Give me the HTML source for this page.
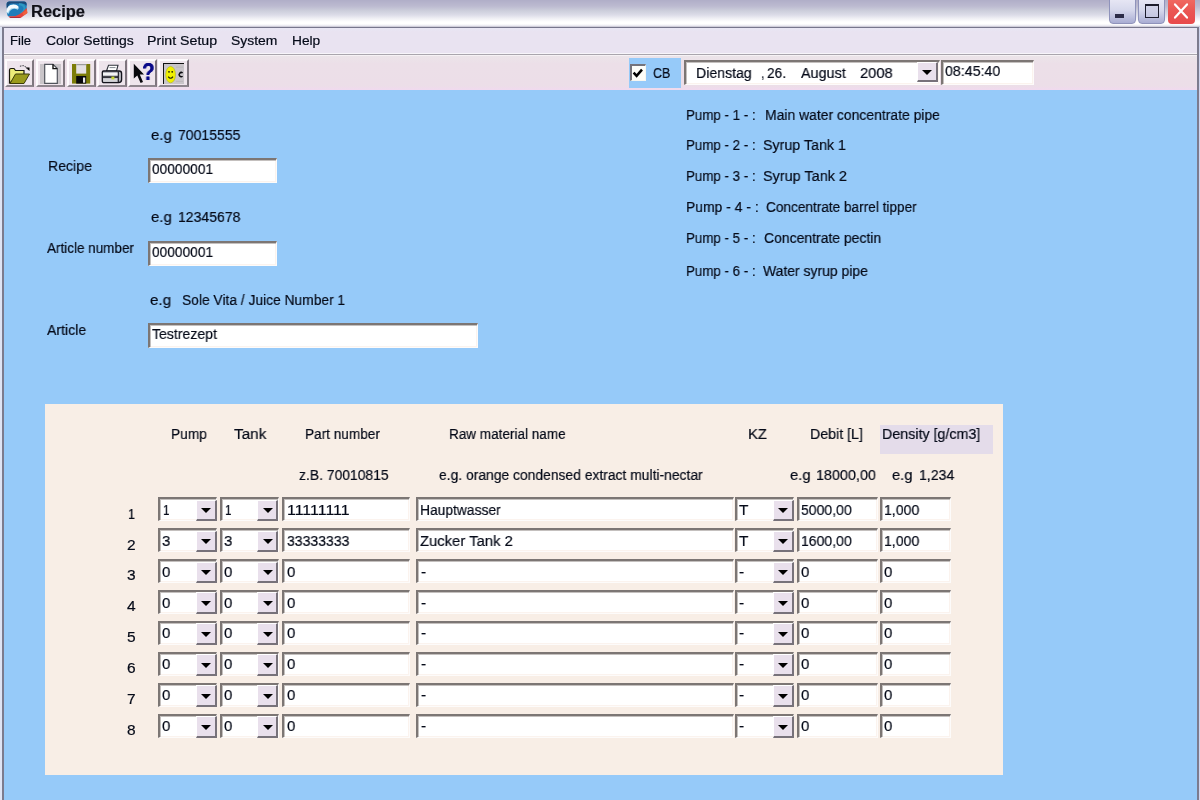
<!DOCTYPE html>
<html>
<head>
<meta charset="utf-8">
<title>Recipe</title>
<style>
html,body{margin:0;padding:0;}
body{width:1200px;height:800px;overflow:hidden;position:relative;background:#96caf9;font-family:"Liberation Sans",sans-serif;}
.b{position:absolute;box-sizing:border-box;}
.t{will-change:transform;transform-origin:0 0;position:absolute;white-space:pre;font-family:"Liberation Sans",sans-serif;-webkit-text-stroke:.2px currentColor;}
/* sunken edit field */
.inp{background:#fff;border-top:2px solid #7c7674;border-left:2px solid #7c7674;border-right:1px solid #fdfbfa;border-bottom:1px solid #fdfbfa;box-shadow:inset 1px 1px 0 #c4c0be, inset -1px -1px 0 #fbf3ee;}
/* combo arrow button */
.cbtn{background:#e9e0ec;border-top:1px solid #fff;border-left:1px solid #fff;border-right:2px solid #77727a;border-bottom:2px solid #77727a;}
.cbtn i{position:absolute;left:50%;top:50%;margin-left:-4.7px;margin-top:-1.6px;width:0;height:0;border-left:5.2px solid transparent;border-right:5.2px solid transparent;border-top:5.2px solid #000;}
/* toolbar button */
.tb{background:#eee5ec;border-top:2px solid #fdfbfd;border-left:2px solid #fdfbfd;border-right:2px solid #7e767e;border-bottom:2px solid #8e868e;}
</style>
</head>
<body>

<!-- title bar -->
<div class="b" style="left:0;top:0;width:1200px;height:27px;background:linear-gradient(to bottom,#b0aec8 0px,#bcbad0 6px,#cdcfdc 11px,#dcdce8 15px,#f2f2f6 19px,#ffffff 22px,#ffffff 24px,#e6e4ee 26px,#b8b6c4 27px);"></div>
<div class="b" style="left:2px;top:26.5px;width:1197px;height:1.6px;background:#77768c;"></div>
<!-- menu bar -->
<div class="b" style="left:4px;top:28px;width:1193px;height:26px;background:linear-gradient(to bottom,#e8e6f4 0px,#e9e3f1 4px,#e9e3f1 26px);"></div>
<div class="b" style="left:4px;top:53px;width:1193px;height:1px;background:#f7f5fa;"></div>
<div class="b" style="left:4px;top:54px;width:1193px;height:1px;background:#a9a5ad;"></div>
<div class="b" style="left:4px;top:55px;width:1193px;height:1px;background:#f6f2f5;"></div>
<!-- toolbar -->
<div class="b" style="left:4px;top:56px;width:1193px;height:33.5px;background:linear-gradient(to bottom,#ebe4e9 0,#ecdfe8 8px,#ecdee8 30px,#f0daee 33.5px);"></div>
<!-- window side borders -->
<div class="b" style="left:0;top:27px;width:2.5px;height:773px;background:#dfe4f4;"></div>
<div class="b" style="left:2.3px;top:27px;width:1.8px;height:773px;background:#7c7b8e;"></div>
<div class="b" style="left:1197px;top:27px;width:1.6px;height:773px;background:#7c7b8e;"></div>
<div class="b" style="left:1198.6px;top:27px;width:1.4px;height:773px;background:#cfd4ee;"></div>

<!-- app icon -->
<svg class="b" style="left:5px;top:0px" width="24" height="20" viewBox="0 0 24 20">
  <path d="M1.6 4 Q1.6 1.4 4.5 1.4 L19 1.4 Q21.6 1.4 21.6 4 L21.8 10.5 L16 16.6 L5 16.8 Q2.4 16.8 2.2 14 Z" fill="#1f7cba"/>
  <path d="M1.6 4.4 Q1.6 1.4 4.5 1.4 L19 1.4 Q21.6 1.4 21.6 4.4 L21.6 5.8 Q20 3.4 17 3.4 L6 3.4 Q3.4 3.8 3 7.5 L1.7 8 Z" fill="#1b4a7a"/>
  <path d="M14 4.2 Q19.4 4.6 19.6 8.6 Q19.4 12 15.6 14" stroke="#34a4c4" stroke-width="2.2" fill="none" opacity=".7"/>
  <path d="M21.6 8 L22.4 13 L15.6 17.9 L5.5 17.9 L3.4 16.2 Q10 16.9 14 14.5 Q18.2 12 21.6 8 Z" fill="#e3453f"/>
  <path d="M17.5 13 L22 9.6 L22.3 13 L18.6 15.6 Z" fill="#f0603c"/>
  <path d="M4 17 L15.4 17.1 L14.6 18.1 L5.5 18.1 Z" fill="#a82c3c"/>
  <path d="M1.5 12.8 Q1.6 7 5.6 5.2 Q10 3.8 13.6 6.4 Q14.4 8.2 12.8 9.8 Q9.4 8 6.6 9.4 Q4.2 10.8 3.8 13.8 Z" fill="#a6d6ec"/>
  <path d="M1.5 11.8 Q1.6 6.8 5.6 5 Q9.6 3.8 13 6 Q13.6 7.4 12.4 8.6 Q9.2 7.2 6 8.6 Q3.6 10 3.1 12.4 Z" fill="#f4fafd"/>
</svg>

<!-- caption buttons -->
<div class="b" style="left:1109px;top:-1px;width:26.5px;height:24.5px;border-radius:0 0 4px 4px;border:1px solid #8f93bb;background:linear-gradient(to bottom,#e6e6f4 0,#d6d8ec 45%,#a9add3 100%);"></div>
<div class="b" style="left:1115px;top:14px;width:9.3px;height:3.6px;background:#2c2c48;"></div>
<div class="b" style="left:1138.4px;top:-1px;width:26.5px;height:24.5px;border-radius:0 0 4px 4px;border:1px solid #8f93bb;background:linear-gradient(to bottom,#e6e6f4 0,#d6d8ec 45%,#a9add3 100%);"></div>
<div class="b" style="left:1145px;top:4px;width:13.8px;height:13.6px;border:1.3px solid #1c1c2c;border-top-width:2.6px;background:rgba(200,202,226,.6);"></div>
<div class="b" style="left:1168px;top:-1px;width:26.8px;height:25px;border-radius:0 0 4px 4px;background:linear-gradient(to bottom,#f06a62 0,#ea5552 50%,#e84a4c 100%);"></div>
<svg class="b" style="left:1172px;top:2px" width="18" height="18" viewBox="0 0 18 18"><path d="M3 2.4 L15 15.6 M15 2.4 L3 15.6" stroke="#fff" stroke-width="2.2" stroke-linecap="round"/></svg>

<!-- toolbar buttons -->
<div class="b tb" style="left:4.5px;top:58.5px;width:29.8px;height:28px;"></div>
<div class="b tb" style="left:35.6px;top:58.5px;width:29.8px;height:28px;"></div>
<div class="b tb" style="left:66.6px;top:58.5px;width:29.8px;height:28px;"></div>
<div class="b tb" style="left:97.2px;top:58.5px;width:29.4px;height:28px;"></div>
<div class="b tb" style="left:127.6px;top:58.5px;width:29.8px;height:28px;"></div>
<div class="b tb" style="left:158.4px;top:58.5px;width:30.4px;height:28px;"></div>

<!-- icon 1: open folder -->
<svg class="b" style="left:8px;top:62px" width="24" height="24" viewBox="0 0 24 24">
  <path d="M1.5 21 L1.5 8 Q1.5 6.5 3 6.5 L6 6.5 L7.5 8.5 L16 8.5 L16 12 L1.5 21 Z" fill="#ecec78" stroke="#18180c" stroke-width="1.2"/>
  <path d="M2 21.5 L7.5 12 L21.5 12 L16 21.5 Z" fill="#9a9a1c" stroke="#3c3c08" stroke-width="1"/>
  <path d="M17.5 5.5 L21.5 5.5 L21.5 9 Z" fill="#000"/>
  <path d="M12 4.5 Q15.5 2 19.5 6.5" stroke="#55555c" stroke-width="1.1" fill="none" stroke-dasharray="1.5 1"/>
</svg>
<!-- icon 2: new document -->
<div class="b" style="left:40px;top:64px;width:20.5px;height:19.5px;background:#c9c5c9;"></div>
<svg class="b" style="left:42px;top:62px" width="20" height="24" viewBox="0 0 20 24">
  <path d="M2.7 2.3 L11 2.3 L15.3 6.6 L15.3 21.3 L2.7 21.3 Z" fill="#fff" stroke="#50545c" stroke-width="1.2"/>
  <path d="M11 2.3 L11 6.6 L15.3 6.6" fill="none" stroke="#101010" stroke-width="1.4"/>
</svg>
<!-- icon 3: floppy -->
<svg class="b" style="left:70px;top:62px" width="24" height="24" viewBox="0 0 24 24">
  <rect x="2" y="2" width="18.2" height="19.6" fill="#7c7c08"/>
  <rect x="6.2" y="2" width="10" height="9.6" fill="#e4e0e4"/>
  <rect x="6.2" y="2" width="10" height="1.2" fill="#9c9c9c"/>
  <rect x="6.2" y="14" width="10" height="7.6" fill="#08080c"/>
  <rect x="13" y="15.5" width="2.2" height="5.2" fill="#e8e8e8"/>
</svg>
<!-- icon 4: printer -->
<svg class="b" style="left:100px;top:62px" width="24" height="24" viewBox="0 0 24 24">
  <path d="M6.5 9 L8.5 3.2 L18 3.2 L16.5 9 Z" fill="#fff" stroke="#30343c" stroke-width="1.1"/>
  <path d="M9.5 5.6 L15.5 5.6" stroke="#808890" stroke-width="1"/>
  <path d="M2.3 10.2 Q2.3 9 3.6 9 L19.2 9 Q21.6 9 21.6 11.5 L21.6 17.5 Q21.6 20.6 18.5 20.6 L4 20.6 Q2.3 20.6 2.3 19 Z" fill="#b9b9c1" stroke="#14141c" stroke-width="1.3"/>
  <rect x="3" y="11" width="15" height="2.2" fill="#f4f4f4"/>
  <rect x="3" y="14.3" width="15" height="1.5" fill="#14141c"/>
  <rect x="3.2" y="16.6" width="14" height="3" fill="#d4d4d8"/>
  <rect x="11.4" y="14.6" width="3" height="2.8" fill="#c8d830"/>
  <path d="M18.3 9.5 L18.3 20" stroke="#14141c" stroke-width="1.1"/>
</svg>
<!-- icon 5: help arrow + ? -->
<svg class="b" style="left:131px;top:62px" width="24" height="24" viewBox="0 0 24 24">
  <path d="M2.8 1.8 L2.8 16.6 L6.3 13.4 L9.6 21 L12 20 L8.8 12.6 L13 12.6 Z" fill="#08080c"/>
</svg>
<div class="t" style="left:141.8px;top:59.8px;font-size:23px;line-height:24px;font-weight:bold;color:#0a0a88;transform:scaleX(.9);text-shadow:0 0 .6px #0a0a88;transform-origin:left top;">?</div>
<!-- icon 6: smiley -->
<div class="b" style="left:163.2px;top:63px;width:20.8px;height:20.5px;background:#c9c5c9;border-top:1.6px solid #111;border-left:1.6px solid #111;"></div>
<svg class="b" style="left:162px;top:62px" width="24" height="24" viewBox="0 0 24 24">
  <ellipse cx="8.6" cy="12.6" rx="4.9" ry="8.2" fill="#f0f000"/>
  <ellipse cx="8.6" cy="12.6" rx="4.9" ry="8.2" fill="none" stroke="#b0b020" stroke-width=".6"/>
  <circle cx="7" cy="9.8" r=".9" fill="#202008"/>
  <circle cx="10.2" cy="9.8" r=".9" fill="#202008"/>
  <path d="M6.2 14.6 Q8.6 18 11 14.6" stroke="#202008" stroke-width="1.1" fill="none"/>
  <path d="M20.6 11 A2.1 2.1 0 1 0 20.6 14.2" stroke="#08080c" stroke-width="1.5" fill="none"/>
  <path d="M14.5 5.2 L21 5.2 M14.5 19.4 L21 19.4" stroke="#a8a4a8" stroke-width=".8" stroke-dasharray="1 1"/>
</svg>

<!-- CB checkbox area -->
<div class="b" style="left:629.4px;top:58px;width:52px;height:30px;background:#96caf9;"></div>
<div class="b" style="left:630.4px;top:64.4px;width:15.8px;height:16.2px;background:#fdfdf8;border-top:2px solid #74747c;border-left:2px solid #74747c;border-right:1px solid #f6f6f0;border-bottom:1px solid #f6f6f0;"></div>
<svg class="b" style="left:630px;top:64px" width="18" height="18" viewBox="0 0 18 18"><path d="M3.6 8.6 L6.6 11.8 L12 5.6" stroke="#000" stroke-width="2.5" fill="none"/></svg>
<!-- date picker -->
<div class="b inp" style="left:684.4px;top:59.6px;width:255.6px;height:25.4px;"></div>
<div class="b cbtn" style="left:917.4px;top:62.4px;width:20.4px;height:19.2px;"><i></i></div>
<!-- time -->
<div class="b inp" style="left:941.2px;top:59.6px;width:93.2px;height:25.4px;"></div>

<!-- table panel -->
<div class="b" style="left:45.2px;top:404.4px;width:957.6px;height:370.6px;background:#f8eee6;"></div>
<div class="b" style="left:880px;top:424.8px;width:112.6px;height:29.4px;background:#e4dcea;"></div>

<!-- caret -->
<div class="b" style="left:210.6px;top:162.4px;width:1.2px;height:13.8px;background:#000;"></div>

<div class="b inp" style="left:148.30px;top:157.50px;width:128.70px;height:25.00px;"></div>
<div class="b inp" style="left:148.30px;top:240.80px;width:128.70px;height:25.00px;"></div>
<div class="b inp" style="left:148.00px;top:322.50px;width:330.00px;height:25.00px;"></div>
<div class="b inp" style="left:158.20px;top:497.10px;width:59.00px;height:24.40px;"></div>
<div class="b cbtn" style="left:195.70px;top:499.60px;width:21.00px;height:21.80px"><i></i></div>
<div class="b inp" style="left:220.30px;top:497.10px;width:58.50px;height:24.40px;"></div>
<div class="b cbtn" style="left:257.30px;top:499.60px;width:21.00px;height:21.80px"><i></i></div>
<div class="b inp" style="left:282.40px;top:497.10px;width:127.80px;height:24.40px;"></div>
<div class="b inp" style="left:416.00px;top:497.10px;width:318.20px;height:24.40px;"></div>
<div class="b inp" style="left:735.40px;top:497.10px;width:59.00px;height:24.40px;"></div>
<div class="b cbtn" style="left:772.90px;top:499.60px;width:21.00px;height:21.80px"><i></i></div>
<div class="b inp" style="left:797.30px;top:497.10px;width:81.10px;height:24.40px;"></div>
<div class="b inp" style="left:879.60px;top:497.10px;width:71.40px;height:24.40px;"></div>
<div class="b inp" style="left:158.20px;top:528.05px;width:59.00px;height:24.40px;"></div>
<div class="b cbtn" style="left:195.70px;top:530.55px;width:21.00px;height:21.80px"><i></i></div>
<div class="b inp" style="left:220.30px;top:528.05px;width:58.50px;height:24.40px;"></div>
<div class="b cbtn" style="left:257.30px;top:530.55px;width:21.00px;height:21.80px"><i></i></div>
<div class="b inp" style="left:282.40px;top:528.05px;width:127.80px;height:24.40px;"></div>
<div class="b inp" style="left:416.00px;top:528.05px;width:318.20px;height:24.40px;"></div>
<div class="b inp" style="left:735.40px;top:528.05px;width:59.00px;height:24.40px;"></div>
<div class="b cbtn" style="left:772.90px;top:530.55px;width:21.00px;height:21.80px"><i></i></div>
<div class="b inp" style="left:797.30px;top:528.05px;width:81.10px;height:24.40px;"></div>
<div class="b inp" style="left:879.60px;top:528.05px;width:71.40px;height:24.40px;"></div>
<div class="b inp" style="left:158.20px;top:559.00px;width:59.00px;height:24.40px;"></div>
<div class="b cbtn" style="left:195.70px;top:561.50px;width:21.00px;height:21.80px"><i></i></div>
<div class="b inp" style="left:220.30px;top:559.00px;width:58.50px;height:24.40px;"></div>
<div class="b cbtn" style="left:257.30px;top:561.50px;width:21.00px;height:21.80px"><i></i></div>
<div class="b inp" style="left:282.40px;top:559.00px;width:127.80px;height:24.40px;"></div>
<div class="b inp" style="left:416.00px;top:559.00px;width:318.20px;height:24.40px;"></div>
<div class="b inp" style="left:735.40px;top:559.00px;width:59.00px;height:24.40px;"></div>
<div class="b cbtn" style="left:772.90px;top:561.50px;width:21.00px;height:21.80px"><i></i></div>
<div class="b inp" style="left:797.30px;top:559.00px;width:81.10px;height:24.40px;"></div>
<div class="b inp" style="left:879.60px;top:559.00px;width:71.40px;height:24.40px;"></div>
<div class="b inp" style="left:158.20px;top:589.95px;width:59.00px;height:24.40px;"></div>
<div class="b cbtn" style="left:195.70px;top:592.45px;width:21.00px;height:21.80px"><i></i></div>
<div class="b inp" style="left:220.30px;top:589.95px;width:58.50px;height:24.40px;"></div>
<div class="b cbtn" style="left:257.30px;top:592.45px;width:21.00px;height:21.80px"><i></i></div>
<div class="b inp" style="left:282.40px;top:589.95px;width:127.80px;height:24.40px;"></div>
<div class="b inp" style="left:416.00px;top:589.95px;width:318.20px;height:24.40px;"></div>
<div class="b inp" style="left:735.40px;top:589.95px;width:59.00px;height:24.40px;"></div>
<div class="b cbtn" style="left:772.90px;top:592.45px;width:21.00px;height:21.80px"><i></i></div>
<div class="b inp" style="left:797.30px;top:589.95px;width:81.10px;height:24.40px;"></div>
<div class="b inp" style="left:879.60px;top:589.95px;width:71.40px;height:24.40px;"></div>
<div class="b inp" style="left:158.20px;top:620.90px;width:59.00px;height:24.40px;"></div>
<div class="b cbtn" style="left:195.70px;top:623.40px;width:21.00px;height:21.80px"><i></i></div>
<div class="b inp" style="left:220.30px;top:620.90px;width:58.50px;height:24.40px;"></div>
<div class="b cbtn" style="left:257.30px;top:623.40px;width:21.00px;height:21.80px"><i></i></div>
<div class="b inp" style="left:282.40px;top:620.90px;width:127.80px;height:24.40px;"></div>
<div class="b inp" style="left:416.00px;top:620.90px;width:318.20px;height:24.40px;"></div>
<div class="b inp" style="left:735.40px;top:620.90px;width:59.00px;height:24.40px;"></div>
<div class="b cbtn" style="left:772.90px;top:623.40px;width:21.00px;height:21.80px"><i></i></div>
<div class="b inp" style="left:797.30px;top:620.90px;width:81.10px;height:24.40px;"></div>
<div class="b inp" style="left:879.60px;top:620.90px;width:71.40px;height:24.40px;"></div>
<div class="b inp" style="left:158.20px;top:651.85px;width:59.00px;height:24.40px;"></div>
<div class="b cbtn" style="left:195.70px;top:654.35px;width:21.00px;height:21.80px"><i></i></div>
<div class="b inp" style="left:220.30px;top:651.85px;width:58.50px;height:24.40px;"></div>
<div class="b cbtn" style="left:257.30px;top:654.35px;width:21.00px;height:21.80px"><i></i></div>
<div class="b inp" style="left:282.40px;top:651.85px;width:127.80px;height:24.40px;"></div>
<div class="b inp" style="left:416.00px;top:651.85px;width:318.20px;height:24.40px;"></div>
<div class="b inp" style="left:735.40px;top:651.85px;width:59.00px;height:24.40px;"></div>
<div class="b cbtn" style="left:772.90px;top:654.35px;width:21.00px;height:21.80px"><i></i></div>
<div class="b inp" style="left:797.30px;top:651.85px;width:81.10px;height:24.40px;"></div>
<div class="b inp" style="left:879.60px;top:651.85px;width:71.40px;height:24.40px;"></div>
<div class="b inp" style="left:158.20px;top:682.80px;width:59.00px;height:24.40px;"></div>
<div class="b cbtn" style="left:195.70px;top:685.30px;width:21.00px;height:21.80px"><i></i></div>
<div class="b inp" style="left:220.30px;top:682.80px;width:58.50px;height:24.40px;"></div>
<div class="b cbtn" style="left:257.30px;top:685.30px;width:21.00px;height:21.80px"><i></i></div>
<div class="b inp" style="left:282.40px;top:682.80px;width:127.80px;height:24.40px;"></div>
<div class="b inp" style="left:416.00px;top:682.80px;width:318.20px;height:24.40px;"></div>
<div class="b inp" style="left:735.40px;top:682.80px;width:59.00px;height:24.40px;"></div>
<div class="b cbtn" style="left:772.90px;top:685.30px;width:21.00px;height:21.80px"><i></i></div>
<div class="b inp" style="left:797.30px;top:682.80px;width:81.10px;height:24.40px;"></div>
<div class="b inp" style="left:879.60px;top:682.80px;width:71.40px;height:24.40px;"></div>
<div class="b inp" style="left:158.20px;top:713.75px;width:59.00px;height:24.40px;"></div>
<div class="b cbtn" style="left:195.70px;top:716.25px;width:21.00px;height:21.80px"><i></i></div>
<div class="b inp" style="left:220.30px;top:713.75px;width:58.50px;height:24.40px;"></div>
<div class="b cbtn" style="left:257.30px;top:716.25px;width:21.00px;height:21.80px"><i></i></div>
<div class="b inp" style="left:282.40px;top:713.75px;width:127.80px;height:24.40px;"></div>
<div class="b inp" style="left:416.00px;top:713.75px;width:318.20px;height:24.40px;"></div>
<div class="b inp" style="left:735.40px;top:713.75px;width:59.00px;height:24.40px;"></div>
<div class="b cbtn" style="left:772.90px;top:716.25px;width:21.00px;height:21.80px"><i></i></div>
<div class="b inp" style="left:797.30px;top:713.75px;width:81.10px;height:24.40px;"></div>
<div class="b inp" style="left:879.60px;top:713.75px;width:71.40px;height:24.40px;"></div>
<div class="t" style="left:31.01px;top:3.96px;font-size:16px;line-height:16px;transform:scaleX(1.0287);font-weight:bold;color:#101018">Recipe</div>
<div class="t" style="left:10.22px;top:33.50px;font-size:13px;line-height:13px;transform:scaleX(1.0055);color:#050a18">File</div>
<div class="t" style="left:45.86px;top:33.50px;font-size:13px;line-height:13px;transform:scaleX(1.0737);color:#050a18">Color Settings</div>
<div class="t" style="left:147.45px;top:33.50px;font-size:13px;line-height:13px;transform:scaleX(1.0897);color:#050a18">Print Setup</div>
<div class="t" style="left:231.47px;top:33.50px;font-size:13px;line-height:13px;transform:scaleX(1.0698);color:#050a18">System</div>
<div class="t" style="left:291.88px;top:33.50px;font-size:13px;line-height:13px;transform:scaleX(1.0560);color:#050a18">Help</div>
<div class="t" style="left:653.45px;top:65.08px;font-size:15.5px;line-height:15.5px;transform:scaleX(0.8026);color:#050a18">CB</div>
<div class="t" style="left:696.15px;top:65.38px;font-size:15.5px;line-height:15.5px;transform:scaleX(0.9102);color:#050a18">Dienstag</div>
<div class="t" style="left:760.74px;top:65.38px;font-size:15.5px;line-height:15.5px;transform:scaleX(0.8155);color:#050a18">,</div>
<div class="t" style="left:767.17px;top:65.38px;font-size:15.5px;line-height:15.5px;transform:scaleX(0.8882);color:#050a18">26.</div>
<div class="t" style="left:801.14px;top:65.38px;font-size:15.5px;line-height:15.5px;transform:scaleX(0.9266);color:#050a18">August</div>
<div class="t" style="left:860.12px;top:65.38px;font-size:15.5px;line-height:15.5px;transform:scaleX(0.9502);color:#050a18">2008</div>
<div class="t" style="left:944.95px;top:63.48px;font-size:15.5px;line-height:15.5px;transform:scaleX(0.9165);color:#050a18">08:45:40</div>
<div class="t" style="left:150.60px;top:127.08px;font-size:15.5px;line-height:15.5px;transform:scaleX(0.9643);color:#050a18">e.g</div>
<div class="t" style="left:178.36px;top:127.08px;font-size:15.5px;line-height:15.5px;transform:scaleX(0.9060);color:#050a18">70015555</div>
<div class="t" style="left:47.90px;top:157.88px;font-size:15.5px;line-height:15.5px;transform:scaleX(0.9108);color:#050a18">Recipe</div>
<div class="t" style="left:151.68px;top:161.48px;font-size:15.5px;line-height:15.5px;transform:scaleX(0.8866);color:#050a18">00000001</div>
<div class="t" style="left:150.60px;top:209.38px;font-size:15.5px;line-height:15.5px;transform:scaleX(0.9643);color:#050a18">e.g</div>
<div class="t" style="left:178.36px;top:209.38px;font-size:15.5px;line-height:15.5px;transform:scaleX(0.9060);color:#050a18">12345678</div>
<div class="t" style="left:47.19px;top:239.88px;font-size:15.5px;line-height:15.5px;transform:scaleX(0.8697);color:#050a18">Article number</div>
<div class="t" style="left:151.68px;top:243.88px;font-size:15.5px;line-height:15.5px;transform:scaleX(0.8866);color:#050a18">00000001</div>
<div class="t" style="left:150.34px;top:291.88px;font-size:15.5px;line-height:15.5px;transform:scaleX(0.9770);color:#050a18">e.g</div>
<div class="t" style="left:181.67px;top:291.88px;font-size:15.5px;line-height:15.5px;transform:scaleX(0.8904);color:#050a18">Sole Vita / Juice Number 1</div>
<div class="t" style="left:47.15px;top:322.38px;font-size:15.5px;line-height:15.5px;transform:scaleX(0.9098);color:#050a18">Article</div>
<div class="t" style="left:152.16px;top:326.38px;font-size:15.5px;line-height:15.5px;transform:scaleX(0.9080);color:#050a18">Testrezept</div>
<div class="t" style="left:686.20px;top:106.88px;font-size:15.5px;line-height:15.5px;transform:scaleX(0.8596);color:#050a18">Pump - 1 - :</div>
<div class="t" style="left:764.66px;top:106.88px;font-size:15.5px;line-height:15.5px;transform:scaleX(0.8983);color:#050a18">Main water concentrate pipe</div>
<div class="t" style="left:686.20px;top:137.38px;font-size:15.5px;line-height:15.5px;transform:scaleX(0.8596);color:#050a18">Pump - 2 - :</div>
<div class="t" style="left:762.89px;top:137.38px;font-size:15.5px;line-height:15.5px;transform:scaleX(0.9199);color:#050a18">Syrup Tank 1</div>
<div class="t" style="left:686.20px;top:167.88px;font-size:15.5px;line-height:15.5px;transform:scaleX(0.8596);color:#050a18">Pump - 3 - :</div>
<div class="t" style="left:762.88px;top:167.88px;font-size:15.5px;line-height:15.5px;transform:scaleX(0.9312);color:#050a18">Syrup Tank 2</div>
<div class="t" style="left:686.17px;top:198.88px;font-size:15.5px;line-height:15.5px;transform:scaleX(0.8975);color:#050a18">Pump - 4 - :</div>
<div class="t" style="left:766.18px;top:198.88px;font-size:15.5px;line-height:15.5px;transform:scaleX(0.8785);color:#050a18">Concentrate barrel tipper</div>
<div class="t" style="left:686.20px;top:229.88px;font-size:15.5px;line-height:15.5px;transform:scaleX(0.8596);color:#050a18">Pump - 5 - :</div>
<div class="t" style="left:763.66px;top:229.88px;font-size:15.5px;line-height:15.5px;transform:scaleX(0.9006);color:#050a18">Concentrate pectin</div>
<div class="t" style="left:686.20px;top:263.13px;font-size:15.5px;line-height:15.5px;transform:scaleX(0.8596);color:#050a18">Pump - 6 - :</div>
<div class="t" style="left:762.91px;top:263.13px;font-size:15.5px;line-height:15.5px;transform:scaleX(0.8999);color:#050a18">Water syrup pipe</div>
<div class="t" style="left:171.18px;top:425.63px;font-size:15.5px;line-height:15.5px;transform:scaleX(0.8864);color:#050a18">Pump</div>
<div class="t" style="left:233.58px;top:425.63px;font-size:15.5px;line-height:15.5px;transform:scaleX(0.9874);color:#050a18">Tank</div>
<div class="t" style="left:304.68px;top:425.63px;font-size:15.5px;line-height:15.5px;transform:scaleX(0.8779);color:#050a18">Part number</div>
<div class="t" style="left:449.19px;top:425.63px;font-size:15.5px;line-height:15.5px;transform:scaleX(0.8734);color:#050a18">Raw material name</div>
<div class="t" style="left:747.91px;top:425.63px;font-size:15.5px;line-height:15.5px;transform:scaleX(0.9581);color:#050a18">KZ</div>
<div class="t" style="left:809.85px;top:425.63px;font-size:15.5px;line-height:15.5px;transform:scaleX(0.9163);color:#050a18">Debit [L]</div>
<div class="t" style="left:881.84px;top:425.63px;font-size:15.5px;line-height:15.5px;transform:scaleX(0.9195);color:#050a18">Density [g/cm3]</div>
<div class="t" style="left:298.67px;top:466.63px;font-size:15.5px;line-height:15.5px;transform:scaleX(0.8968);color:#050a18">z.B. 70010815</div>
<div class="t" style="left:439.17px;top:466.63px;font-size:15.5px;line-height:15.5px;transform:scaleX(0.8948);color:#050a18">e.g. orange condensed extract multi-nectar</div>
<div class="t" style="left:789.81px;top:466.63px;font-size:15.5px;line-height:15.5px;transform:scaleX(0.9542);color:#050a18">e.g</div>
<div class="t" style="left:815.64px;top:466.63px;font-size:15.5px;line-height:15.5px;transform:scaleX(0.9268);color:#050a18">18000,00</div>
<div class="t" style="left:891.92px;top:466.63px;font-size:15.5px;line-height:15.5px;transform:scaleX(0.9491);color:#050a18">e.g</div>
<div class="t" style="left:919.45px;top:466.63px;font-size:15.5px;line-height:15.5px;transform:scaleX(0.9097);color:#050a18">1,234</div>
<div class="t" style="left:127.54px;top:505.58px;font-size:15.5px;line-height:15.5px;transform:scaleX(0.8130);color:#050a18">1</div>
<div class="t" style="left:162.61px;top:501.68px;font-size:15.5px;line-height:15.5px;transform:scaleX(0.7391);color:#050a18">1</div>
<div class="t" style="left:224.61px;top:501.68px;font-size:15.5px;line-height:15.5px;transform:scaleX(0.7391);color:#050a18">1</div>
<div class="t" style="left:286.54px;top:501.68px;font-size:15.5px;line-height:15.5px;transform:scaleX(1.0288);color:#050a18">11111111</div>
<div class="t" style="left:420.17px;top:501.68px;font-size:15.5px;line-height:15.5px;transform:scaleX(0.8916);color:#050a18">Hauptwasser</div>
<div class="t" style="left:739.08px;top:501.68px;font-size:15.5px;line-height:15.5px;transform:scaleX(0.9857);color:#050a18">T</div>
<div class="t" style="left:801.16px;top:501.68px;font-size:15.5px;line-height:15.5px;transform:scaleX(0.9049);color:#050a18">5000,00</div>
<div class="t" style="left:883.65px;top:501.68px;font-size:15.5px;line-height:15.5px;transform:scaleX(0.9091);color:#050a18">1,000</div>
<div class="t" style="left:127.37px;top:536.53px;font-size:15.5px;line-height:15.5px;transform:scaleX(1.0000);color:#050a18">2</div>
<div class="t" style="left:162.41px;top:532.63px;font-size:15.5px;line-height:15.5px;transform:scaleX(0.9608);color:#050a18">3</div>
<div class="t" style="left:224.41px;top:532.63px;font-size:15.5px;line-height:15.5px;transform:scaleX(0.9608);color:#050a18">3</div>
<div class="t" style="left:286.66px;top:532.63px;font-size:15.5px;line-height:15.5px;transform:scaleX(0.9054);color:#050a18">33333333</div>
<div class="t" style="left:420.11px;top:532.63px;font-size:15.5px;line-height:15.5px;transform:scaleX(0.9557);color:#050a18">Zucker Tank 2</div>
<div class="t" style="left:739.08px;top:532.63px;font-size:15.5px;line-height:15.5px;transform:scaleX(0.9857);color:#050a18">T</div>
<div class="t" style="left:801.16px;top:532.63px;font-size:15.5px;line-height:15.5px;transform:scaleX(0.9049);color:#050a18">1600,00</div>
<div class="t" style="left:883.65px;top:532.63px;font-size:15.5px;line-height:15.5px;transform:scaleX(0.9091);color:#050a18">1,000</div>
<div class="t" style="left:127.37px;top:567.48px;font-size:15.5px;line-height:15.5px;transform:scaleX(1.0000);color:#050a18">3</div>
<div class="t" style="left:162.41px;top:563.58px;font-size:15.5px;line-height:15.5px;transform:scaleX(0.9608);color:#050a18">0</div>
<div class="t" style="left:224.41px;top:563.58px;font-size:15.5px;line-height:15.5px;transform:scaleX(0.9608);color:#050a18">0</div>
<div class="t" style="left:286.61px;top:563.58px;font-size:15.5px;line-height:15.5px;transform:scaleX(0.9608);color:#050a18">0</div>
<div class="t" style="left:420.57px;top:563.58px;font-size:15.5px;line-height:15.5px;transform:scaleX(1.0000);color:#050a18">-</div>
<div class="t" style="left:739.07px;top:563.58px;font-size:15.5px;line-height:15.5px;transform:scaleX(1.0000);color:#050a18">-</div>
<div class="t" style="left:801.11px;top:563.58px;font-size:15.5px;line-height:15.5px;transform:scaleX(0.9608);color:#050a18">0</div>
<div class="t" style="left:883.61px;top:563.58px;font-size:15.5px;line-height:15.5px;transform:scaleX(0.9608);color:#050a18">0</div>
<div class="t" style="left:127.37px;top:598.43px;font-size:15.5px;line-height:15.5px;transform:scaleX(1.0000);color:#050a18">4</div>
<div class="t" style="left:162.41px;top:594.53px;font-size:15.5px;line-height:15.5px;transform:scaleX(0.9608);color:#050a18">0</div>
<div class="t" style="left:224.41px;top:594.53px;font-size:15.5px;line-height:15.5px;transform:scaleX(0.9608);color:#050a18">0</div>
<div class="t" style="left:286.61px;top:594.53px;font-size:15.5px;line-height:15.5px;transform:scaleX(0.9608);color:#050a18">0</div>
<div class="t" style="left:420.57px;top:594.53px;font-size:15.5px;line-height:15.5px;transform:scaleX(1.0000);color:#050a18">-</div>
<div class="t" style="left:739.07px;top:594.53px;font-size:15.5px;line-height:15.5px;transform:scaleX(1.0000);color:#050a18">-</div>
<div class="t" style="left:801.11px;top:594.53px;font-size:15.5px;line-height:15.5px;transform:scaleX(0.9608);color:#050a18">0</div>
<div class="t" style="left:883.61px;top:594.53px;font-size:15.5px;line-height:15.5px;transform:scaleX(0.9608);color:#050a18">0</div>
<div class="t" style="left:127.37px;top:629.38px;font-size:15.5px;line-height:15.5px;transform:scaleX(1.0000);color:#050a18">5</div>
<div class="t" style="left:162.41px;top:625.48px;font-size:15.5px;line-height:15.5px;transform:scaleX(0.9608);color:#050a18">0</div>
<div class="t" style="left:224.41px;top:625.48px;font-size:15.5px;line-height:15.5px;transform:scaleX(0.9608);color:#050a18">0</div>
<div class="t" style="left:286.61px;top:625.48px;font-size:15.5px;line-height:15.5px;transform:scaleX(0.9608);color:#050a18">0</div>
<div class="t" style="left:420.57px;top:625.48px;font-size:15.5px;line-height:15.5px;transform:scaleX(1.0000);color:#050a18">-</div>
<div class="t" style="left:739.07px;top:625.48px;font-size:15.5px;line-height:15.5px;transform:scaleX(1.0000);color:#050a18">-</div>
<div class="t" style="left:801.11px;top:625.48px;font-size:15.5px;line-height:15.5px;transform:scaleX(0.9608);color:#050a18">0</div>
<div class="t" style="left:883.61px;top:625.48px;font-size:15.5px;line-height:15.5px;transform:scaleX(0.9608);color:#050a18">0</div>
<div class="t" style="left:127.37px;top:660.33px;font-size:15.5px;line-height:15.5px;transform:scaleX(1.0000);color:#050a18">6</div>
<div class="t" style="left:162.41px;top:656.43px;font-size:15.5px;line-height:15.5px;transform:scaleX(0.9608);color:#050a18">0</div>
<div class="t" style="left:224.41px;top:656.43px;font-size:15.5px;line-height:15.5px;transform:scaleX(0.9608);color:#050a18">0</div>
<div class="t" style="left:286.61px;top:656.43px;font-size:15.5px;line-height:15.5px;transform:scaleX(0.9608);color:#050a18">0</div>
<div class="t" style="left:420.57px;top:656.43px;font-size:15.5px;line-height:15.5px;transform:scaleX(1.0000);color:#050a18">-</div>
<div class="t" style="left:739.07px;top:656.43px;font-size:15.5px;line-height:15.5px;transform:scaleX(1.0000);color:#050a18">-</div>
<div class="t" style="left:801.11px;top:656.43px;font-size:15.5px;line-height:15.5px;transform:scaleX(0.9608);color:#050a18">0</div>
<div class="t" style="left:883.61px;top:656.43px;font-size:15.5px;line-height:15.5px;transform:scaleX(0.9608);color:#050a18">0</div>
<div class="t" style="left:127.37px;top:691.28px;font-size:15.5px;line-height:15.5px;transform:scaleX(1.0000);color:#050a18">7</div>
<div class="t" style="left:162.41px;top:687.38px;font-size:15.5px;line-height:15.5px;transform:scaleX(0.9608);color:#050a18">0</div>
<div class="t" style="left:224.41px;top:687.38px;font-size:15.5px;line-height:15.5px;transform:scaleX(0.9608);color:#050a18">0</div>
<div class="t" style="left:286.61px;top:687.38px;font-size:15.5px;line-height:15.5px;transform:scaleX(0.9608);color:#050a18">0</div>
<div class="t" style="left:420.57px;top:687.38px;font-size:15.5px;line-height:15.5px;transform:scaleX(1.0000);color:#050a18">-</div>
<div class="t" style="left:739.07px;top:687.38px;font-size:15.5px;line-height:15.5px;transform:scaleX(1.0000);color:#050a18">-</div>
<div class="t" style="left:801.11px;top:687.38px;font-size:15.5px;line-height:15.5px;transform:scaleX(0.9608);color:#050a18">0</div>
<div class="t" style="left:883.61px;top:687.38px;font-size:15.5px;line-height:15.5px;transform:scaleX(0.9608);color:#050a18">0</div>
<div class="t" style="left:127.37px;top:722.23px;font-size:15.5px;line-height:15.5px;transform:scaleX(1.0000);color:#050a18">8</div>
<div class="t" style="left:162.41px;top:718.33px;font-size:15.5px;line-height:15.5px;transform:scaleX(0.9608);color:#050a18">0</div>
<div class="t" style="left:224.41px;top:718.33px;font-size:15.5px;line-height:15.5px;transform:scaleX(0.9608);color:#050a18">0</div>
<div class="t" style="left:286.61px;top:718.33px;font-size:15.5px;line-height:15.5px;transform:scaleX(0.9608);color:#050a18">0</div>
<div class="t" style="left:420.57px;top:718.33px;font-size:15.5px;line-height:15.5px;transform:scaleX(1.0000);color:#050a18">-</div>
<div class="t" style="left:739.07px;top:718.33px;font-size:15.5px;line-height:15.5px;transform:scaleX(1.0000);color:#050a18">-</div>
<div class="t" style="left:801.11px;top:718.33px;font-size:15.5px;line-height:15.5px;transform:scaleX(0.9608);color:#050a18">0</div>
<div class="t" style="left:883.61px;top:718.33px;font-size:15.5px;line-height:15.5px;transform:scaleX(0.9608);color:#050a18">0</div>
</body>
</html>
